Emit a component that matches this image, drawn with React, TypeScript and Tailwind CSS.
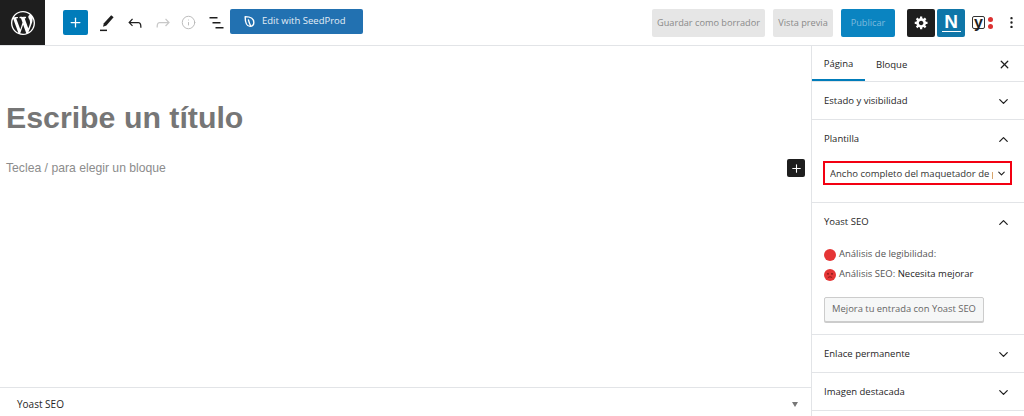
import { ChevronDown, ChevronUp, Plus, Info, X, MoreVertical } from "lucide-react";

const SANS = "font-['Open_Sans',sans-serif]";

function WpLogo() {
  return (
    <svg width="24" height="24" viewBox="0 0 20 20" fill="#fff">
      <path d="M20 10c0-5.51-4.49-10-10-10C4.48 0 0 4.49 0 10c0 5.52 4.48 10 10 10 5.51 0 10-4.48 10-10zM7.78 15.37L4.37 6.22c.55-.02 1.17-.08 1.17-.08.5-.06.44-1.13-.06-1.11 0 0-1.45.11-2.37.11-.18 0-.37 0-.58-.01C4.12 2.69 6.87 1.11 10 1.11c2.33 0 4.45.87 6.05 2.34-.68-.11-1.65.39-1.65 1.58 0 .74.45 1.36.9 2.1.35.61.55 1.36.55 2.46 0 1.49-1.4 5-1.4 5l-3.03-8.37c.54-.02.82-.17.82-.17.5-.05.44-1.25-.06-1.22 0 0-1.44.12-2.38.12-.87 0-2.33-.12-2.33-.12-.5-.03-.56 1.2-.06 1.22l.92.08 1.26 3.41zM17.41 10c.24-.64.74-1.87.43-4.25.7 1.29 1.05 2.71 1.05 4.25 0 3.29-1.73 6.24-4.4 7.78.97-2.59 1.94-5.2 2.92-7.78zM6.1 18.09C3.12 16.65 1.11 13.53 1.11 10c0-1.3.23-2.48.72-3.59C3.25 10.3 4.67 14.2 6.1 18.09zm4.03-6.63l2.58 6.98c-.86.29-1.76.45-2.71.45-.79 0-1.57-.11-2.29-.33.81-2.38 1.62-4.74 2.42-7.1z" />
    </svg>
  );
}

function SeedLeaf() {
  return (
    <svg width="13" height="13" viewBox="0 0 24 24" fill="none" stroke="#fff" strokeWidth="2.6" strokeLinejoin="round" strokeLinecap="round">
      <path d="M4 3c9 0 16 3 16 11 0 5-3 7-7 7-6 0-9-7-9-18z" />
      <path d="M10 9c1 4 2 7 4 11" />
    </svg>
  );
}

function Pencil() {
  return (
    <svg width="16" height="20" viewBox="0 0 16 20" fill="#1e1e1e">
      <path d="M12.2 2.2l2.4 2.1-7.2 8.1-3.4 1.4.9-3.5z" />
      <rect x="1" y="16.6" width="7" height="1.5" />
    </svg>
  );
}

function UndoIcon() {
  return (
    <svg width="20" height="20" viewBox="0 0 24 24" fill="#1e1e1e" className="ml-[10px]">
      <path d="M18.3 11.7c-.6-.6-1.4-.9-2.3-.9H6.7l2.9-3.3-1.1-1-4.5 5L8.5 16l1-1-2.7-2.7H16c.5 0 .9.2 1.3.5 1 1 1 3.4 1 4.5v.3h1.5v-.2c0-1.5 0-4.3-1.5-5.7z" />
    </svg>
  );
}

function RedoIcon() {
  return (
    <svg width="20" height="20" viewBox="0 0 24 24" fill="#c8c8c8" className="ml-[8px]">
      <path d="M15.6 6.5l-1.1 1 2.9 3.3H8c-.9 0-1.7.3-2.3.9-1.4 1.5-1.4 4.2-1.4 5.6v.2h1.5v-.3c0-1.1 0-3.5 1-4.5.3-.3.7-.5 1.3-.5h9.2L14.5 15l1.1 1.1 4.6-4.6-4.6-5z" />
    </svg>
  );
}

function ListView() {
  return (
    <svg width="16" height="14" viewBox="0 0 16 14" fill="#1e1e1e">
      <rect x="0.5" y="1" width="8" height="1.5" />
      <rect x="3.5" y="6" width="8" height="1.5" />
      <rect x="6.5" y="11" width="8" height="1.5" />
    </svg>
  );
}

function GearIcon() {
  return (
    <svg width="15" height="15" viewBox="0 0 20 20" fill="#fff">
      <path d="M18 12h-2.18c-.17.7-.44 1.35-.81 1.93l1.54 1.54-2.1 2.1-1.54-1.54c-.58.36-1.23.63-1.91.79V19H8v-2.18c-.68-.16-1.33-.43-1.91-.79l-1.54 1.54-2.12-2.12 1.54-1.54c-.36-.58-.63-1.23-.79-1.91H1V9.03h2.17c.16-.7.44-1.35.8-1.94L2.43 5.55l2.1-2.1 1.54 1.54c.58-.37 1.24-.64 1.93-.81V2h3v2.18c.68.16 1.33.43 1.91.79l1.54-1.54 2.12 2.12-1.54 1.54c.36.59.64 1.24.8 1.94H18V12zm-8.5 1.5c1.66 0 3-1.34 3-3s-1.34-3-3-3-3 1.34-3 3 1.34 3 3 3z" />
    </svg>
  );
}

function YoastIcon() {
  return (
    <div className="flex items-center gap-[3px]">
      <div className="flex h-[13px] w-[13px] items-center justify-center rounded-[2px] border border-[#333] bg-white">
        <span className="font-['Liberation_Sans',sans-serif] text-[16px] font-bold leading-[10px] text-[#1e1e1e]">y</span>
      </div>
      <div className="flex flex-col gap-[2px]">
        <div className="h-[5px] w-[5px] rounded-full bg-[#dc3232]" />
        <div className="h-[5px] w-[5px] rounded-full bg-[#dc3232]" />
      </div>
    </div>
  );
}

function PanelRow({ title, open }: { title: string; open?: boolean }) {
  return (
    <div className="flex h-[37px] items-center justify-between pl-[12px] pr-[13px] pt-[2px]">
      <span className="text-[9.5px] font-medium text-[#262626]">{title}</span>
      {open ? (
        <ChevronUp size={15} strokeWidth={2} className="text-[#1e1e1e]" />
      ) : (
        <ChevronDown size={15} strokeWidth={2} className="text-[#1e1e1e]" />
      )}
    </div>
  );
}

export default function App() {
  return (
    <div className={`flex h-[416px] w-[1024px] flex-col overflow-hidden bg-white ${SANS}`}>
      {/* top bar */}
      <header className="flex h-[46px] shrink-0 items-center border-b border-[#e2e4e7]">
        <div className="flex h-[45px] w-[45px] shrink-0 items-center justify-center bg-[#1e1e1e]">
          <WpLogo />
        </div>
        <div className="ml-[18px] flex h-[25px] w-[25px] items-center justify-center rounded-[2px] bg-[#007cba]">
          <Plus size={15} strokeWidth={2} className="text-white" />
        </div>
        <div className="ml-[11px] flex w-[16px] justify-center"><Pencil /></div>
        <UndoIcon />
        <RedoIcon />
        <Info size={15} strokeWidth={1.5} className="ml-[8px] text-[#b8b8b8]" />
        <div className="ml-[13px]"><ListView /></div>
        <div className="ml-[5px] -mt-[2px] flex h-[25px] w-[133px] items-center rounded-[2px] bg-[#2271b1] pl-[13px]">
          <SeedLeaf />
          <span className="ml-[6px] text-[9.5px] font-medium text-[#e4edf5]">Edit with SeedProd</span>
        </div>
        <div className="ml-auto flex items-center">
          <div className="flex h-[28px] w-[113px] items-center justify-center rounded-[2px] bg-[#e6e6e6] text-[9.2px] text-[#8a8a8a]">Guardar como borrador</div>
          <div className="ml-[8px] flex h-[28px] w-[60px] items-center justify-center rounded-[2px] bg-[#e6e6e6] text-[9.2px] text-[#8a8a8a]">Vista previa</div>
          <div className="ml-[8px] flex h-[28px] w-[54px] items-center justify-center rounded-[2px] bg-[#0a84c1] text-[9.2px] text-[#7fbbdd]">Publicar</div>
          <div className="ml-[12px] flex h-[28px] w-[28px] items-center justify-center rounded-[2px] bg-[#1e1e1e]">
            <GearIcon />
          </div>
          <div className="ml-[2px] flex h-[28px] w-[28px] flex-col items-center justify-center rounded-[2px] bg-[#0f76a8]">
            <span className="font-['Liberation_Sans',sans-serif] text-[19px] font-bold leading-[18px] text-white">N</span>
            <div className="h-[1.5px] w-[19px] bg-white" />
          </div>
          <div className="ml-[7px]"><YoastIcon /></div>
          <MoreVertical size={15} strokeWidth={1.8} className="ml-[11px] mr-[5px] text-[#1e1e1e]" />
        </div>
      </header>

      <div className="flex min-h-0 flex-1">
        {/* editor */}
        <main className="flex min-w-0 flex-1 flex-col">
          <div className="flex-1 pl-[6px] font-['Liberation_Sans',sans-serif]">
            <h1 className="mt-[52px] text-[30.3px] font-bold leading-[40px] text-[#767676]">Escribe un título</h1>
            <div className="mt-[21px] flex items-center justify-between pr-[6px]">
              <p className="text-[12.2px] text-[#8c8c8c]">Teclea / para elegir un bloque</p>
              <div className="flex h-[18px] w-[18px] items-center justify-center rounded-[2px] bg-[#1e1e1e]">
                <Plus size={13} strokeWidth={2} className="text-white" />
              </div>
            </div>
          </div>
          <div className="flex h-[29px] shrink-0 items-center justify-between border-t border-[#e2e4e7] pl-[17px] pr-[13px] pt-[4px]">
            <span className="text-[10px] font-medium text-[#262626]">Yoast SEO</span>
            <div className="h-0 w-0 border-x-[3px] border-t-[5px] border-x-transparent border-t-[#777]" />
          </div>
        </main>

        {/* sidebar */}
        <aside className="flex w-[213px] shrink-0 flex-col border-l border-[#e2e4e7]">
          <div className="flex h-[36px] shrink-0 items-stretch border-b border-[#e2e4e7]">
            <div className="flex w-[53px] items-center justify-center border-b-[2px] border-[#007cba] pt-[3px] text-[9.5px] font-medium text-[#262626]">Página</div>
            <div className="ml-[11px] flex items-center pt-[3px] text-[9.5px] font-medium text-[#262626]">Bloque</div>
            <X size={13} strokeWidth={2.4} className="ml-auto mr-[13px] mt-[2px] self-center text-[#1e1e1e]" />
          </div>
          <div className="border-b border-[#e2e4e7]"><PanelRow title="Estado y visibilidad" /></div>
          <div className="h-[83px] border-b border-[#e2e4e7]">
            <PanelRow title="Plantilla" open />
            <div className="ml-[11px] mt-[4px] flex h-[24px] w-[189px] items-center justify-between overflow-hidden border-2 border-[#f30012] pl-[5px] pr-[3px] pt-[1px]">
              <span className="h-[14px] w-[163px] overflow-hidden whitespace-nowrap text-[9.5px] text-[#333]">Ancho completo del maquetador de página</span>
              <ChevronDown size={11} strokeWidth={2.4} className="shrink-0 text-[#1e1e1e]" />
            </div>
          </div>
          <div className="h-[132px] border-b border-[#e2e4e7]">
            <PanelRow title="Yoast SEO" open />
            <div className="mt-[5px] flex h-[19px] items-center pl-[12px] text-[9.5px] text-[#555]">
              <div className="mr-[3px] h-[12px] w-[12px] rounded-full bg-[#e53535]" />
              Análisis de legibilidad:
            </div>
            <div className="flex h-[21px] items-center pl-[12px] text-[9.5px] text-[#555]">
              <svg width="12" height="12" viewBox="0 0 12 12" className="mr-[3px]">
                <circle cx="6" cy="6" r="6" fill="#e53535" />
                <circle cx="4" cy="4.8" r="0.9" fill="#7a1616" />
                <circle cx="8" cy="4.8" r="0.9" fill="#7a1616" />
                <path d="M3.8 8.8c1.2-1.3 3.2-1.3 4.4 0" stroke="#7a1616" strokeWidth="0.9" fill="none" />
              </svg>
              Análisis SEO:&nbsp;<span className="font-medium text-[#262626]">Necesita mejorar</span>
            </div>
            <div className="ml-[12px] mt-[12px] flex h-[25px] w-[160px] items-center justify-center rounded-[2px] border border-[#ccc] bg-[#f6f7f7] text-[9.4px] text-[#666] shadow-[0_1px_0_#ccc]">Mejora tu entrada con Yoast SEO</div>
          </div>
          <div className="border-b border-[#e2e4e7]"><PanelRow title="Enlace permanente" /></div>
          <div className="border-b border-[#e2e4e7]"><PanelRow title="Imagen destacada" /></div>
        </aside>
      </div>
    </div>
  );
}
